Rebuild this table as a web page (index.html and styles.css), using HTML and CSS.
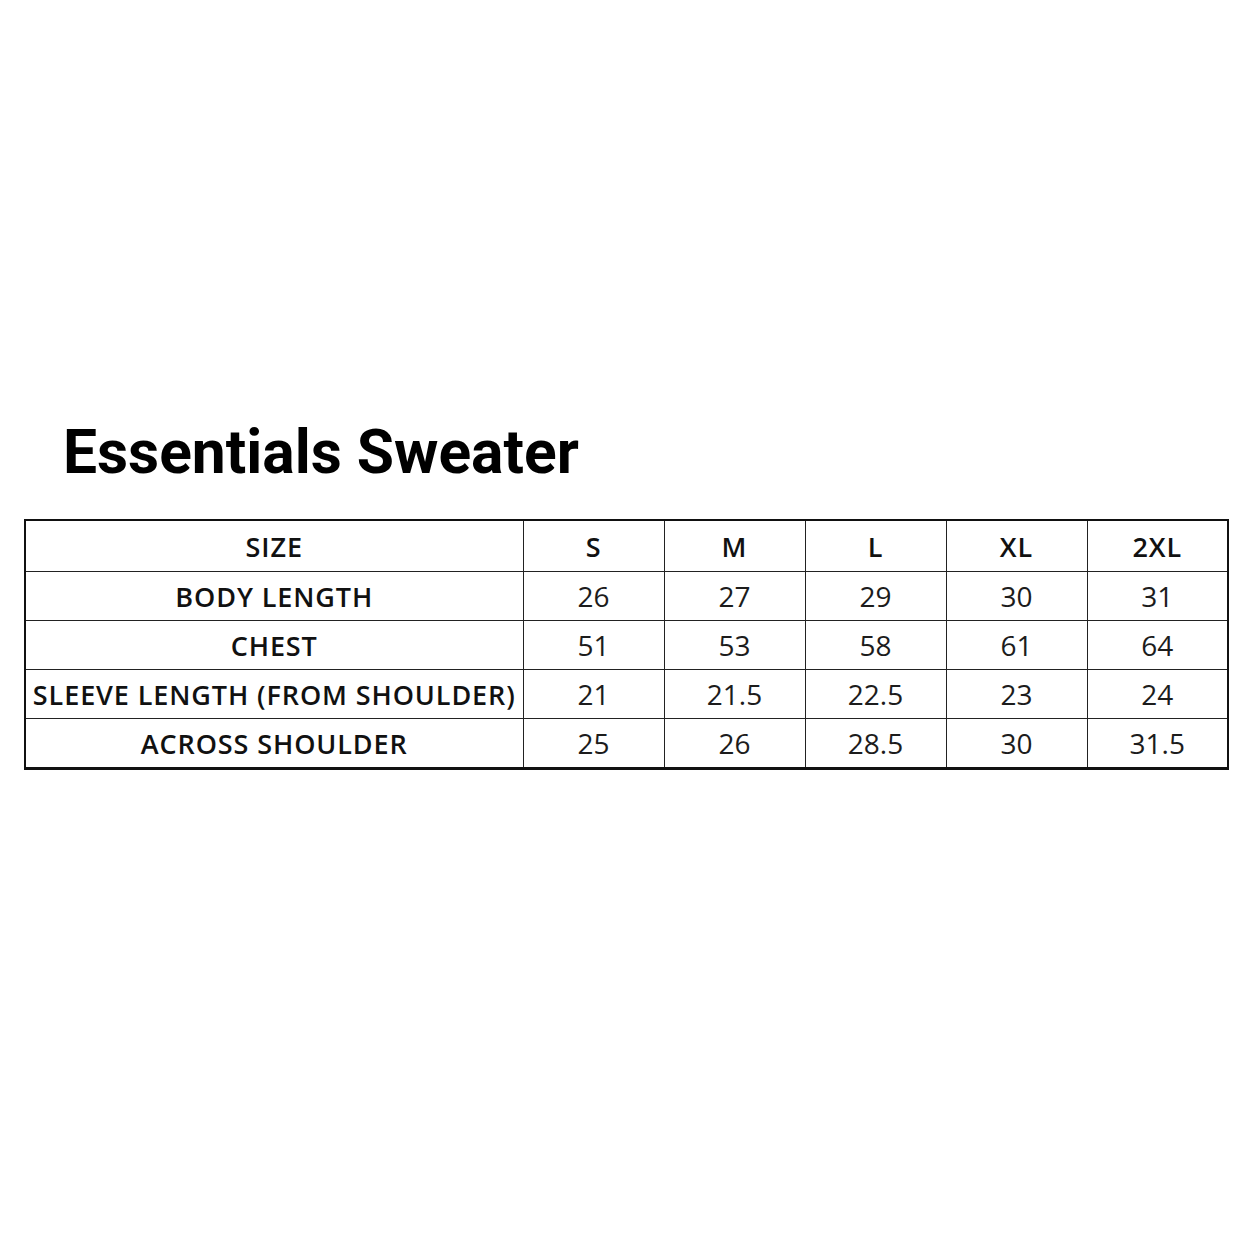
FILE: index.html
```html
<!DOCTYPE html>
<html>
<head>
<meta charset="utf-8">
<link rel="stylesheet" href="styles.css">
</head>
<body>
<main class="page">
  <h1 class="title">Essentials Sweater</h1>
  <table class="chart">
    <colgroup>
      <col class="c-label"><col class="c-size"><col class="c-size"><col class="c-size"><col class="c-size"><col class="c-size">
    </colgroup>
    <tr class="head"><th>SIZE</th><th>S</th><th>M</th><th>L</th><th>XL</th><th>2XL</th></tr>
    <tr><th>BODY LENGTH</th><td>26</td><td>27</td><td>29</td><td>30</td><td>31</td></tr>
    <tr><th>CHEST</th><td>51</td><td>53</td><td>58</td><td>61</td><td>64</td></tr>
    <tr><th>SLEEVE LENGTH (FROM SHOULDER)</th><td>21</td><td>21.5</td><td>22.5</td><td>23</td><td>24</td></tr>
    <tr><th>ACROSS SHOULDER</th><td>25</td><td>26</td><td>28.5</td><td>30</td><td>31.5</td></tr>
  </table>
</main>
</body>
</html>
```

FILE: styles.css
```css
html, body {
  margin: 0;
  padding: 0;
  background: #ffffff;
}
.page {
  padding-top: 423px;
  padding-left: 24px;
  width: 1204px;
}
.title {
  margin: 0 0 36px 39px;
  font-family: Roboto, "Liberation Sans", sans-serif;
  font-weight: 700;
  font-size: 60.5px;
  line-height: 60px;
  color: #000;
}
.chart {
  border-collapse: collapse;
  width: 1204px;
  table-layout: fixed;
  border: 2px solid #111;
  border-bottom-width: 3px;
  font-family: "Open Sans", "Liberation Sans", sans-serif;
  font-size: 28px;
  color: #1c1c1c;
}
.c-label { width: 498px; }
.c-size { width: 141px; }
.chart th, .chart td {
  border: 1px solid #222;
  height: 48px;
  padding: 0;
  text-align: center;
  vertical-align: middle;
  white-space: nowrap;
}
.chart th {
  font-weight: 600;
  font-size: 27px;
  letter-spacing: 0.9px;
  color: #111;
}
.chart td { font-weight: 400; }
.chart .head th { height: 50px; }
```
